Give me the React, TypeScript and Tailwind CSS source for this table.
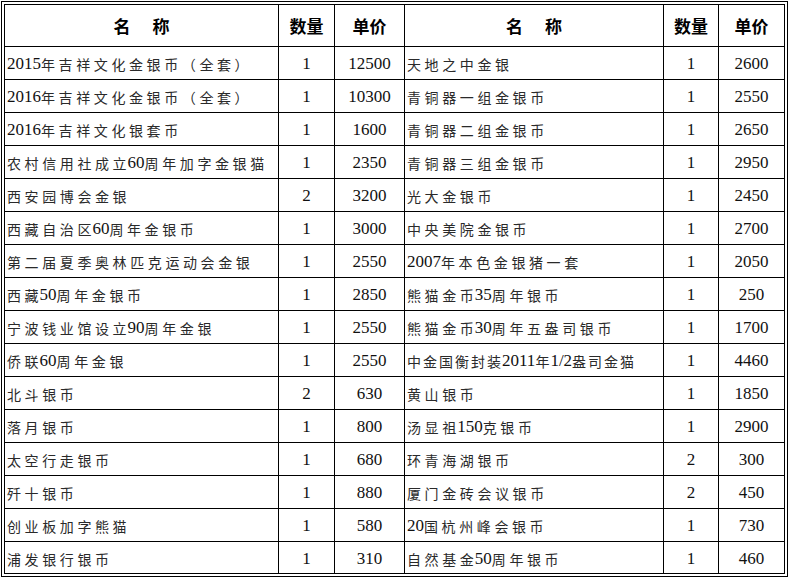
const rows: [string, string, string, string, string, string][] = [
  ['2015年吉祥文化金银币（全套）', '1', '12500', '天地之中金银', '1', '2600'],
  ['2016年吉祥文化金银币（全套）', '1', '10300', '青铜器一组金银币', '1', '2550'],
  ['2016年吉祥文化银套币', '1', '1600', '青铜器二组金银币', '1', '2650'],
  ['农村信用社成立60周年加字金银猫', '1', '2350', '青铜器三组金银币', '1', '2950'],
  ['西安园博会金银', '2', '3200', '光大金银币', '1', '2450'],
  ['西藏自治区60周年金银币', '1', '3000', '中央美院金银币', '1', '2700'],
  ['第二届夏季奥林匹克运动会金银', '1', '2550', '2007年本色金银猪一套', '1', '2050'],
  ['西藏50周年金银币', '1', '2850', '熊猫金币35周年银币', '1', '250'],
  ['宁波钱业馆设立90周年金银', '1', '2550', '熊猫金币30周年五盎司银币', '1', '1700'],
  ['侨联60周年金银', '1', '2550', '中金国衡封装2011年1/2盎司金猫', '1', '4460'],
  ['北斗银币', '2', '630', '黄山银币', '1', '1850'],
  ['落月银币', '1', '800', '汤显祖150克银币', '1', '2900'],
  ['太空行走银币', '1', '680', '环青海湖银币', '2', '300'],
  ['歼十银币', '1', '880', '厦门金砖会议银币', '2', '450'],
  ['创业板加字熊猫', '1', '580', '20国杭州峰会银币', '1', '730'],
  ['浦发银行银币', '1', '310', '自然基金50周年银币', '1', '460'],
]

const serif = "font-['Liberation_Serif','Times_New_Roman',serif]"
const cjk = "font-['Noto_Sans_CJK_SC','Noto_Sans_CJK_JP',sans-serif]"

const isLatin = (s: string) => /^[\u0000-\u00ff]+$/.test(s)

// mixed text: latin runs in serif 17px, CJK runs smaller with wide spacing
function Name({ text }: { text: string }) {
  const tight = text.length > 17
  const parts = text.split(/([\u0000-\u00ff]+)/).filter(Boolean)
  const spacing = tight ? 'tracking-[2px]' : 'tracking-[3.6px]'
  return (
    <div className="flex items-center bg-white pl-[2px] pt-[2px] whitespace-nowrap">
      {parts.map((p, i) => {
        if (isLatin(p))
          return (
            <span key={i} className={`${serif} text-[17px] leading-[20px] text-[#111]`}>
              {p}
            </span>
          )
        const beforeLatin = i < parts.length - 1
        if (!beforeLatin)
          return (
            <span key={i} className={`${cjk} text-[14px] leading-[20px] text-[#2a2a2a] ${spacing}`}>
              {p}
            </span>
          )
        // last char before digits gets no trailing spacing
        return (
          <span key={i} className={`${cjk} text-[14px] leading-[20px] text-[#2a2a2a] mr-[1px]`}>
            <span className={spacing}>{p.slice(0, -1)}</span>
            {p.slice(-1)}
          </span>
        )
      })}
    </div>
  )
}

function Num({ v }: { v: string }) {
  return (
    <div className={`flex items-center justify-center bg-white pt-[2px] ${serif} text-[17px] leading-[20px] text-[#111]`}>
      {v}
    </div>
  )
}

function Head({ children }: { children: React.ReactNode }) {
  return (
    <div className={`flex items-center justify-center gap-[22px] bg-white ${cjk} text-[17px] font-bold text-black`}>
      {children}
    </div>
  )
}

export default function App() {
  return (
    <div className="w-[790px] h-[578px] bg-white pl-[1px] pt-[1px]">
      {/* double outer frame */}
      <div className="w-[787px] h-[576px] border border-black p-[2px]">
        <div className="grid grid-cols-[273px_55px_69px_258px_54px_65px] grid-rows-[41px_repeat(15,32px)_31px] gap-px bg-black p-px w-[781px]">
          <Head>
            <span>名</span>
            <span>称</span>
          </Head>
          <Head>数量</Head>
          <Head>单价</Head>
          <Head>
            <span>名</span>
            <span>称</span>
          </Head>
          <Head>数量</Head>
          <Head>单价</Head>
          {rows.map((r, i) => (
            <div key={i} className="contents">
              <Name text={r[0]} />
              <Num v={r[1]} />
              <Num v={r[2]} />
              <Name text={r[3]} />
              <Num v={r[4]} />
              <Num v={r[5]} />
            </div>
          ))}
        </div>
      </div>
    </div>
  )
}
